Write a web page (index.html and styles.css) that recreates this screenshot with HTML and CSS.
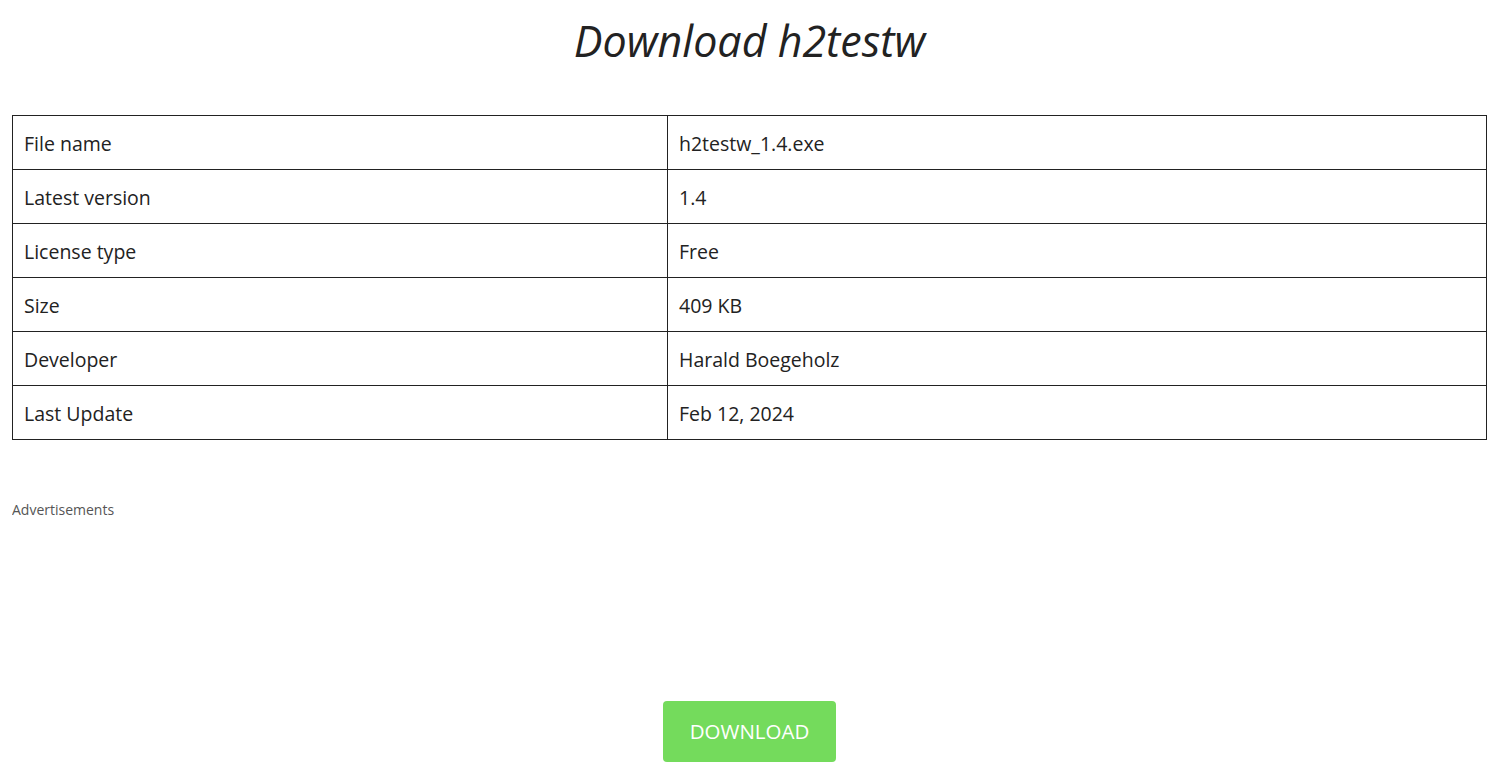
FILE: index.html
```html
<!DOCTYPE html>
<html>
<head>
  <link rel="stylesheet" href="styles.css">
</head>
<body>
  <h1 class="title">Download h2testw</h1>

  <table class="info-table">
    <tr><td>File name</td><td>h2testw_1.4.exe</td></tr>
    <tr><td>Latest version</td><td>1.4</td></tr>
    <tr><td>License type</td><td>Free</td></tr>
    <tr><td>Size</td><td>409 KB</td></tr>
    <tr><td>Developer</td><td>Harald Boegeholz</td></tr>
    <tr><td>Last Update</td><td>Feb 12, 2024</td></tr>
  </table>

  <div class="ads">
    <span class="ads-label">Advertisements</span>
  </div>

  <div class="download">
    <a href="#" class="download-button">DOWNLOAD</a>
  </div>
</body>
</html>
```

FILE: styles.css
```css
* {
  margin: 0;
  padding: 0;
  box-sizing: border-box;
}

body {
  font-family: "Open Sans", "Noto Sans", sans-serif;
  color: #222;
  background: #fff;
  margin: 0 13px 0 12px;
}

.title {
  font-size: 43px;
  font-style: italic;
  font-weight: normal;
  text-align: center;
  line-height: 58px;
  padding-top: 12px;
  margin-bottom: 45px;
}

.info-table {
  width: 100%;
  border-collapse: collapse;
  font-size: 19.5px;
}

.info-table td {
  border: 1px solid #222;
  height: 54px;
  padding: 1px 11px 0;
  vertical-align: middle;
}

.info-table td:first-child {
  width: 655px;
}

.ads {
  height: 261px;
  padding-top: 58px;
}

.ads-label {
  font-size: 14px;
  color: #555;
}

.download {
  display: flex;
  justify-content: center;
}

.download-button {
  display: inline-block;
  width: 173px;
  height: 61px;
  line-height: 61px;
  text-align: center;
  background: #74db5c;
  color: #fff;
  font-size: 20.5px;
  text-decoration: none;
  border-radius: 4px;
}
```
